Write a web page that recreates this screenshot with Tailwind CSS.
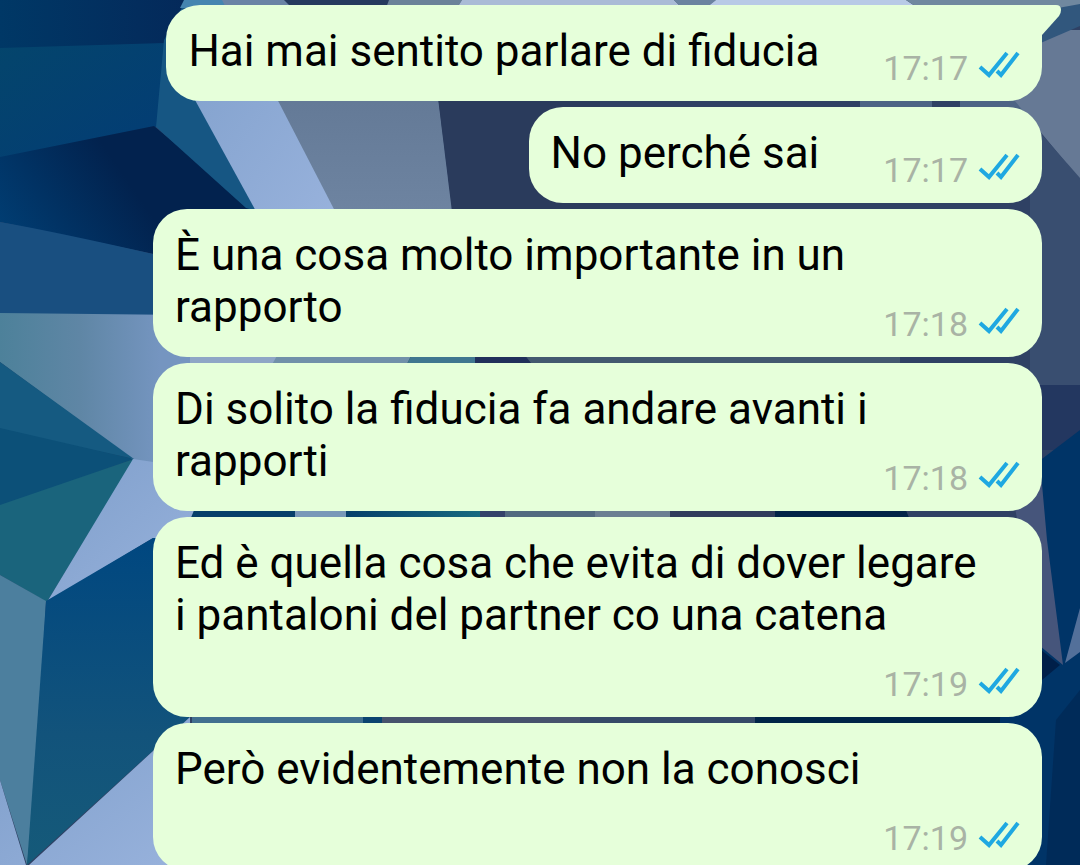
<!DOCTYPE html>
<html lang="it">
<head>
<meta charset="utf-8">
<meta name="viewport" content="width=device-width, initial-scale=1">
<title>Chat</title>
<script src="https://cdn.jsdelivr.net/npm/@tailwindcss/browser@4"></script>
</head>
<body class="relative min-h-screen overflow-x-hidden bg-[#2f4164] font-[Roboto,sans-serif] text-black">
<!-- Faceted wallpaper -->
<svg class="fixed inset-0 h-full w-full" viewBox="0 0 1080 865" preserveAspectRatio="xMidYMid slice" aria-hidden="true">
  <defs>
    <linearGradient id="a" x1="0" y1="0" x2="1" y2="0"><stop offset="0" stop-color="#003866"/><stop offset="1" stop-color="#04295a"/></linearGradient>
    <linearGradient id="b" x1="0" y1="0" x2="1" y2="1"><stop offset="0" stop-color="#04456c"/><stop offset="1" stop-color="#033c75"/></linearGradient>
    <linearGradient id="c" x1="0" y1="1" x2="1" y2="0.6"><stop offset="0" stop-color="#00437a"/><stop offset="0.65" stop-color="#02224e"/></linearGradient>
    <linearGradient id="d" gradientUnits="userSpaceOnUse" x1="0" y1="0" x2="160" y2="0"><stop offset="0" stop-color="#4d819a"/><stop offset="0.5" stop-color="#5f86a5"/><stop offset="1" stop-color="#7595c0"/></linearGradient>
    <linearGradient id="e" x1="0" y1="0" x2="0" y2="1"><stop offset="0" stop-color="#004780"/><stop offset="0.6" stop-color="#12537b"/><stop offset="1" stop-color="#155a79"/></linearGradient>
    <linearGradient id="f" x1="0" y1="0" x2="1" y2="1"><stop offset="0" stop-color="#7f9fcb"/><stop offset="1" stop-color="#98b2dc"/></linearGradient>
    <linearGradient id="g" x1="0" y1="0" x2="0" y2="1"><stop offset="0" stop-color="#5b718e"/><stop offset="1" stop-color="#6e84a1"/></linearGradient>
    <linearGradient id="h" x1="0" y1="0" x2="1" y2="0"><stop offset="0" stop-color="#06406a"/><stop offset="1" stop-color="#176a80"/></linearGradient>
  </defs>
  <path fill="url(#a)" d="M0 0H186L165 44 0 50z"/>
  <path fill="url(#b)" d="M0 48 165 43 157 127 0 158z"/>
  <path fill="url(#c)" d="M0 157 154 126 255 210V275L0 222z"/>
  <path fill="#194f80" d="M0 222Q80 236 260 279V318L0 314z"/>
  <path fill="#165683" d="M164 40 186 0 200 100 260 212 246 208 156 127z"/>
  <path fill="url(#f)" d="M186 0H226L340 215H258L195 100z"/>
  <path fill="url(#g)" d="M226 0H426L453 215H337z"/>
  <path fill="#2a3b5c" d="M426 0H600V220H453z"/>
  <path fill="#4d6485" d="M860 98H932V110H860zM960 98H1040V110H960z"/>
  <path fill="#4585b0" d="M184 0H225V8H180z"/>
  <path fill="#6a83a5" d="M222 0H286L292 8H226z"/>
  <path fill="#263a5e" d="M284 0H389V8H292z"/>
  <path fill="#6b8299" d="M389 0H462L457 8H386z"/>
  <path fill="#aabbd6" d="M462 0H674L682 8H457z"/>
  <path fill="#6b83a0" d="M674 0H716L706 8H682z"/>
  <path fill="#b8cae6" d="M716 0H906L918 8H706z"/>
  <path fill="url(#d)" d="M0 313 280 316V540L152 520 133 460 0 362z"/>
  <path fill="#155a81" d="M0 362 134 459 0 430z"/>
  <path fill="#0c5078" d="M0 428 134 459 0 507z"/>
  <path fill="#1a647c" d="M0 505 134 459 47 602 0 575z"/>
  <path fill="url(#f)" d="M133 459 160 463 200 510V538H153L47 602z"/>
  <path fill="#4c7f9e" d="M0 575 46 601 36 790 27 865 0 780z"/>
  <path fill="url(#e)" d="M46 601 153 538H220V690L27 865z"/>
  <path fill="url(#f)" d="M0 780 26 865H0zM29 865 190 717V865z"/>
  <path fill="#8fa6c6" d="M190 354H280L270 368H190z"/>
  <path fill="#7190a9" d="M278 354H412L405 368H270z"/>
  <path fill="#40778f" d="M412 354H475V368H405z"/>
  <path fill="#21305a" d="M475 354H524L535 368H475z"/>
  <path fill="#43596f" d="M524 354H900V368H535z"/>
  <path fill="#06406a" d="M195 508H296V520H190z"/>
  <path fill="#7898b8" d="M295 508H346V520H295z"/>
  <path fill="url(#h)" d="M346 508H480V520H346z"/>
  <path fill="#34426a" d="M480 508H505V520H480z"/>
  <path fill="#526a80" d="M505 508H595V520H505z"/>
  <path fill="#6b7f92" d="M595 508H670V520H595z"/>
  <path fill="#303c5c" d="M670 508H775V520H670z"/>
  <path fill="#022448" d="M775 508H905L910 520H775z"/>
  <path fill="#42708f" d="M192 714H363V726H192z"/>
  <path fill="#0b4470" d="M363 714H382V726H363z"/>
  <path fill="#47536d" d="M382 714H580V726H382z"/>
  <path fill="#364a68" d="M580 714H755V726H580z"/>
  <path fill="#012548" d="M755 714H1010V726H755z"/>
  <path fill="#667995" d="M1010 30H1080V180L1010 95z"/>
  <path fill="#70889f" d="M906 0H1080V8H918z"/>
  <path fill="#31577d" d="M1036 12 1080 4V26L1036 45z"/>
  <path fill="#394e70" d="M1030 121 1080 178V385H1030z"/>
  <path fill="#233760" d="M1030 385H1080V450H1030z"/>
  <path fill="#003467" d="M1030 468 1080 430V865H1000V718L1030 640z"/>
  <path fill="#46557b" d="M1010 480 1040 462 1047 540 1063 665 1040 646z"/>
  <path fill="#53709a" d="M1080 608V652L1065 663z"/>
  <path fill="#001f49" d="M1030 641 1060 665 1030 690z"/>
  <path fill="#002b59" d="M1056 720 1080 690V865H1046z"/>
</svg>

<main class="relative flex flex-col items-end gap-1.5 pt-[5px] pr-[38px] pl-[153px] text-[44px] leading-[52px]">
  <article class="relative flex min-h-24 items-end gap-16 rounded-[34px] rounded-tr-none bg-[#e6ffda] pt-5 pr-[22px] pb-3.5 pl-[22px]">
    <svg class="absolute top-0 left-full h-8 w-5" viewBox="0 0 20 32" aria-hidden="true"><path fill="#e6ffda" d="M-1 0H14Q19 0 19 5 19 8 17 11L0 30H-1z"/></svg>
    <p class="self-start">Hai mai sentito parlare di fiducia</p>
    <div class="flex items-center gap-3 text-[34px] leading-[38px] text-[#a9b3a5]"><time>17:17</time><svg class="h-7 w-10 overflow-visible" viewBox="1 2 40 28" fill="none" stroke="#1fa8e1" stroke-width="4" role="img" aria-label="Letto"><path d="M1 15 10 23 28 1M18 19 22 23 39 1"/></svg></div>
  </article>
  <article class="flex min-h-24 items-end gap-16 rounded-[34px] bg-[#e6ffda] pt-5 pr-[22px] pb-3.5 pl-[22px]">
    <p class="self-start">No perché sai</p>
    <div class="flex items-center gap-3 text-[34px] leading-[38px] text-[#a9b3a5]"><time>17:17</time><svg class="h-7 w-10 overflow-visible" viewBox="1 2 40 28" fill="none" stroke="#1fa8e1" stroke-width="4" role="img" aria-label="Letto"><path d="M1 15 10 23 28 1M18 19 22 23 39 1"/></svg></div>
  </article>
  <article class="flex w-full items-end justify-between rounded-[34px] bg-[#e6ffda] pt-5 pr-[22px] pb-3.5 pl-[22px]">
    <p class="-mr-8 pb-2.5">È una cosa molto importante in un<br>rapporto</p>
    <div class="flex items-center gap-3 text-[34px] leading-[38px] text-[#a9b3a5]"><time>17:18</time><svg class="h-7 w-10 overflow-visible" viewBox="1 2 40 28" fill="none" stroke="#1fa8e1" stroke-width="4" role="img" aria-label="Letto"><path d="M1 15 10 23 28 1M18 19 22 23 39 1"/></svg></div>
  </article>
  <article class="flex w-full items-end justify-between rounded-[34px] bg-[#e6ffda] pt-5 pr-[22px] pb-3.5 pl-[22px]">
    <p class="-mr-8 pb-2.5">Di solito la fiducia fa andare avanti i<br>rapporti</p>
    <div class="flex items-center gap-3 text-[34px] leading-[38px] text-[#a9b3a5]"><time>17:18</time><svg class="h-7 w-10 overflow-visible" viewBox="1 2 40 28" fill="none" stroke="#1fa8e1" stroke-width="4" role="img" aria-label="Letto"><path d="M1 15 10 23 28 1M18 19 22 23 39 1"/></svg></div>
  </article>
  <article class="flex w-full flex-col items-end gap-6 rounded-[34px] bg-[#e6ffda] pt-5 pr-[22px] pb-3.5 pl-[22px]">
    <p class="w-full">Ed è quella cosa che evita di dover legare<br>i pantaloni del partner co una catena</p>
    <div class="flex items-center gap-3 text-[34px] leading-[38px] text-[#a9b3a5]"><time>17:19</time><svg class="h-7 w-10 overflow-visible" viewBox="1 2 40 28" fill="none" stroke="#1fa8e1" stroke-width="4" role="img" aria-label="Letto"><path d="M1 15 10 23 28 1M18 19 22 23 39 1"/></svg></div>
  </article>
  <article class="flex w-full flex-col items-end gap-6 rounded-[34px] bg-[#e6ffda] pt-5 pr-[22px] pb-3.5 pl-[22px]">
    <p class="w-full">Però evidentemente non la conosci</p>
    <div class="flex items-center gap-3 text-[34px] leading-[38px] text-[#a9b3a5]"><time>17:19</time><svg class="h-7 w-10 overflow-visible" viewBox="1 2 40 28" fill="none" stroke="#1fa8e1" stroke-width="4" role="img" aria-label="Letto"><path d="M1 15 10 23 28 1M18 19 22 23 39 1"/></svg></div>
  </article>
</main>
</body>
</html>
